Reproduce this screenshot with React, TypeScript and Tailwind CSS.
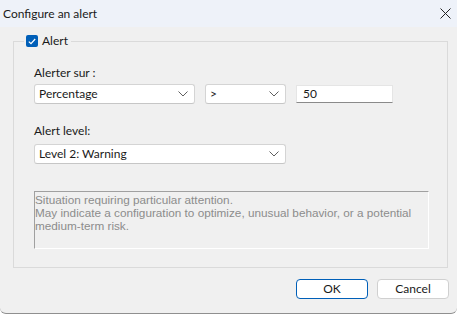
import React from "react";

const Chevron = () => (
  <svg width="10" height="6" viewBox="0 0 10 6" className="shrink-0">
    <path d="M0.5 0.5 L5 5 L9.5 0.5" fill="none" stroke="#5f5f5f" strokeWidth="1" />
  </svg>
);

const Select = ({ value, w }: { value: string; w: string }) => (
  <div
    className={`${w} h-[20px] bg-white border border-[#d4d4d4] border-b-[#c6c6c6] rounded-[3px] flex items-center justify-between pl-[4px] pr-[6px] text-[12px] text-[#1a1a1a]`}
  >
    <span className="leading-none">{value}</span>
    <Chevron />
  </div>
);

export default function App() {
  return (
    <div
      className="w-[457px] h-[314px] bg-[#f0f0f0] flex flex-col overflow-hidden border-b border-[#8f8f8f] rounded-b-[6px]"
      style={{ fontFamily: '"Segoe UI", Lato, "Noto Sans", sans-serif' }}
    >
      {/* Title bar */}
      <div className="h-[27px] bg-[#eef2f9] flex items-center justify-between pl-[3px] pr-[6px] shrink-0">
        <span className="text-[12px] text-[#1a1a1a] leading-none">Configure an alert</span>
        <svg width="11" height="11" viewBox="0 0 11 11">
          <path d="M0.5 0.5 L10.5 10.5 M10.5 0.5 L0.5 10.5" stroke="#222" strokeWidth="1" />
        </svg>
      </div>

      {/* Group box */}
      <div className="relative mt-[14px] ml-[13px] w-[435px] h-[227px] border border-[#dadada] shrink-0 pl-[20px] pt-[23px]">
        <div className="absolute left-[10px] top-[-9px] bg-[#f0f0f0] flex items-center gap-[4px] pl-[2px] pr-[3px] h-[16px]">
          <div className="w-[12px] h-[12px] rounded-[2px] bg-[#005fb8] flex items-center justify-center">
            <svg width="8" height="7" viewBox="0 0 8 7">
              <path d="M0.8 3.6 L3 5.7 L7.2 1" fill="none" stroke="white" strokeWidth="1.2" />
            </svg>
          </div>
          <span className="text-[12px] text-[#1a1a1a] leading-none">Alert</span>
        </div>

        <div className="h-[16px] flex items-center text-[12px] text-[#1a1a1a]">Alerter sur :</div>
        <div className="mt-[3px] flex items-center gap-[10px]">
          <Select value="Percentage" w="w-[161px]" />
          <Select value=">" w="w-[81px]" />
          <div className="w-[97px] h-[18px] bg-white border border-[#e5e5e5] border-b-[#8a8a8a] flex items-center pl-[6px] text-[12px] text-[#1a1a1a]">
            50
          </div>
        </div>

        <div className="mt-[19px] h-[16px] flex items-center text-[12px] text-[#1a1a1a]">Alert level:</div>
        <div className="mt-[5px]">
          <Select value="Level 2: Warning" w="w-[252px]" />
        </div>

        <div
          className="mt-[27px] w-[395px] h-[58px] border-l border-t border-[#a0a0a0] border-r-white border-b-white border-r border-b pt-[1px] text-[11.75px] leading-[13px] text-[#8c8c8c]"
          style={{ fontFamily: '"Liberation Sans", Arial, sans-serif' }}
        >
          Situation requiring particular attention.
          <br />
          May indicate a configuration to optimize, unusual behavior, or a potential
          <br />
          medium-term risk.
        </div>
      </div>

      {/* Buttons */}
      <div className="mt-[11px] flex justify-end gap-[9px] pr-[8px]">
        <button className="w-[72px] h-[20px] bg-white border border-[#005fb8] rounded-[4px] text-[12px] text-[#1a1a1a] flex items-center justify-center">
          OK
        </button>
        <button className="w-[72px] h-[20px] bg-white border border-[#d0d0d0] rounded-[4px] text-[12px] text-[#1a1a1a] flex items-center justify-center">
          Cancel
        </button>
      </div>
    </div>
  );
}
